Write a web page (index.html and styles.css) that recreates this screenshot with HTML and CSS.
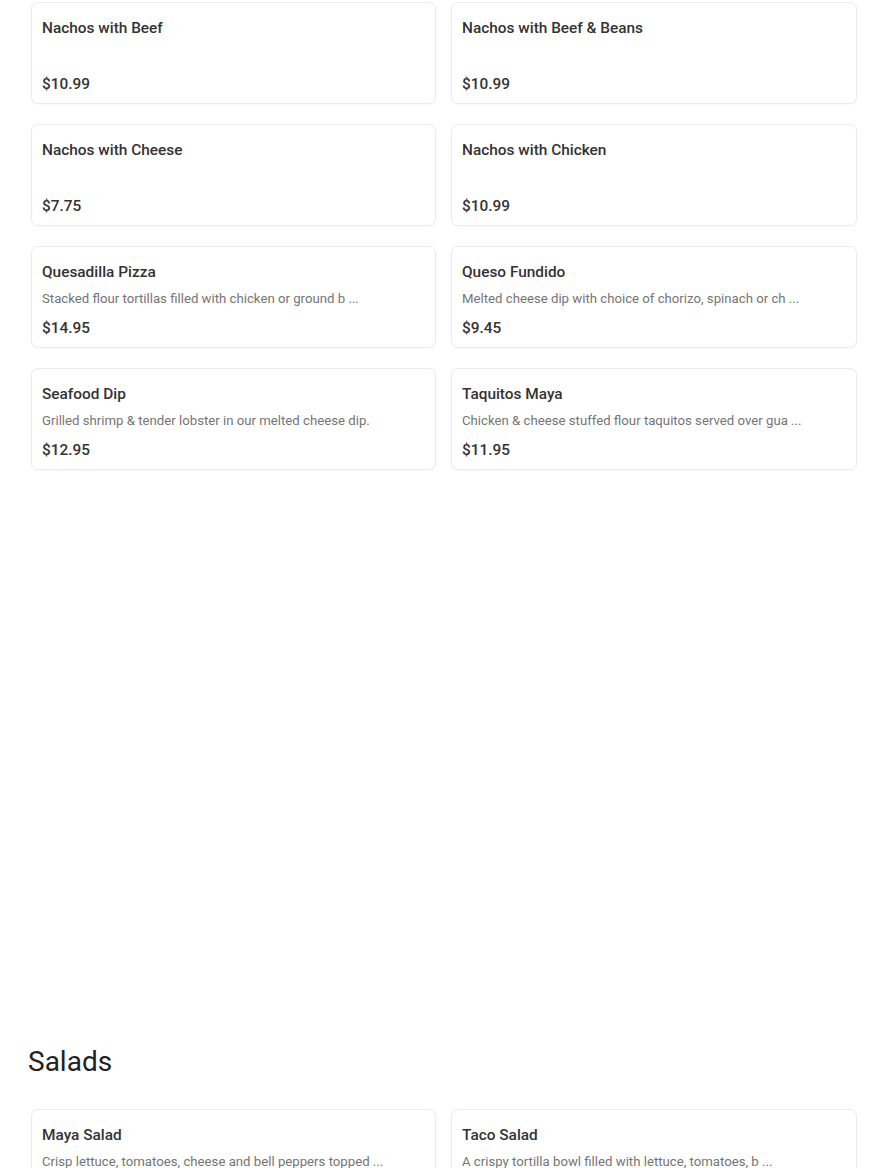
FILE: index.html
```html
<!DOCTYPE html>
<html lang="en">
<head>
<meta charset="utf-8">
<title>Menu</title>
<link rel="stylesheet" href="styles.css">
</head>
<body>
<main class="menu">
  <section class="category category-first">
    <div class="grid">
      <div class="card"><div class="title">Nachos with Beef</div><div class="desc"></div><div class="price">$10.99</div></div>
      <div class="card"><div class="title">Nachos with Beef &amp; Beans</div><div class="desc"></div><div class="price">$10.99</div></div>
      <div class="card"><div class="title">Nachos with Cheese</div><div class="desc"></div><div class="price">$7.75</div></div>
      <div class="card"><div class="title">Nachos with Chicken</div><div class="desc"></div><div class="price">$10.99</div></div>
      <div class="card"><div class="title">Quesadilla Pizza</div><div class="desc">Stacked flour tortillas filled with chicken or ground b ...</div><div class="price">$14.95</div></div>
      <div class="card"><div class="title">Queso Fundido</div><div class="desc">Melted cheese dip with choice of chorizo, spinach or ch ...</div><div class="price">$9.45</div></div>
      <div class="card"><div class="title">Seafood Dip</div><div class="desc">Grilled shrimp &amp; tender lobster in our melted cheese dip.</div><div class="price">$12.95</div></div>
      <div class="card"><div class="title">Taquitos Maya</div><div class="desc">Chicken &amp; cheese stuffed flour taquitos served over gua ...</div><div class="price">$11.95</div></div>
    </div>
  </section>
  <section class="category">
    <h2 class="cat-title">Salads</h2>
    <div class="grid">
      <div class="card"><div class="title">Maya Salad</div><div class="desc">Crisp lettuce, tomatoes, cheese and bell peppers topped ...</div><div class="price">$9.95</div></div>
      <div class="card"><div class="title">Taco Salad</div><div class="desc">A crispy tortilla bowl filled with lettuce, tomatoes, b ...</div><div class="price">$10.95</div></div>
    </div>
  </section>
</main>
</body>
</html>
```
FILE: styles.css
```css
html, body {
  margin: 0;
  padding: 0;
  background: #ffffff;
}
body {
  font-family: Roboto, "Liberation Sans", Arial, sans-serif;
  color: #333333;
  overflow: hidden;
  height: 1168px;
}
.menu {
  padding: 2px 33px 0 31px;
}
.category-first {
  margin-bottom: 572px;
}
.cat-title {
  margin: 0 0 27px -3px;
  font-size: 28px;
  line-height: 40px;
  font-weight: 400;
  color: #222222;
}
.grid {
  display: grid;
  grid-template-columns: 405px 406px;
  column-gap: 15px;
  row-gap: 20px;
}
.card {
  box-sizing: border-box;
  height: 102px;
  border: 1px solid #ebebeb;
  border-radius: 7px;
  padding: 15px 10px 9px;
  background: #fff;
  box-shadow: 0 1px 2px rgba(0,0,0,0.03);
}
.title {
  font-size: 15.4px;
  line-height: 20px;
  font-weight: 500;
  color: #333333;
  white-space: nowrap;
}
.desc {
  margin-top: 8px;
  height: 18px;
  font-size: 13.2px;
  line-height: 18px;
  color: #757575;
  white-space: nowrap;
  overflow: hidden;
}
.price {
  margin-top: 10px;
  font-size: 15.4px;
  line-height: 20px;
  font-weight: 500;
  color: #333333;
}
```
